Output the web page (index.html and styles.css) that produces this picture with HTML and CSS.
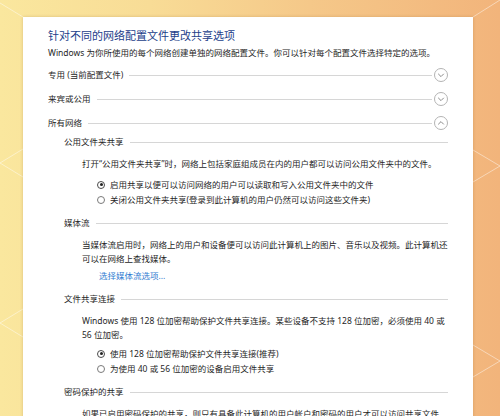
FILE: index.html
```html
<!DOCTYPE html>
<html lang="zh-CN">
<head>
<meta charset="utf-8">
<title>高级共享设置</title>
<link rel="stylesheet" href="styles.css">
</head>
<body>
<svg class="bg-lines" width="500" height="416" viewBox="0 0 500 416" aria-hidden="true">
  <g stroke="#ffffff" stroke-opacity="0.45" stroke-width="1" fill="none">
    <path d="M0 3 L23 17"/>
    <path d="M500 0 L473 17"/>
    <path d="M23 149 L0 163 L23 177"/>
    <path d="M23 309 L0 323 L23 337"/>
    <path d="M473 150 L500 166 L473 182"/>
    <path d="M473 345 L500 361 L473 377"/>
  </g>
</svg>
<main class="card">
  <h1 class="title">针对不同的网络配置文件更改共享选项</h1>
  <p class="intro">Windows 为你所使用的每个网络创建单独的网络配置文件。你可以针对每个配置文件选择特定的选项。</p>

  <div class="groups">
    <div class="group">
      <span class="group-label">专用 (当前配置文件)</span>
      <span class="rule rule-group"></span>
      <span class="toggle">
        <svg width="14" height="14" viewBox="0 0 14 14"><circle cx="7" cy="7" r="6.5" fill="#fff" stroke="#b3b3b3"/><path d="M4.2 5.8 L7 8.6 L9.8 5.8" fill="none" stroke="#8c8c8c" stroke-width="1"/></svg>
      </span>
    </div>
    <div class="group">
      <span class="group-label">来宾或公用</span>
      <span class="rule rule-group"></span>
      <span class="toggle">
        <svg width="14" height="14" viewBox="0 0 14 14"><circle cx="7" cy="7" r="6.5" fill="#fff" stroke="#b3b3b3"/><path d="M4.2 5.8 L7 8.6 L9.8 5.8" fill="none" stroke="#8c8c8c" stroke-width="1"/></svg>
      </span>
    </div>
    <div class="group">
      <span class="group-label">所有网络</span>
      <span class="rule rule-group"></span>
      <span class="toggle">
        <svg width="14" height="14" viewBox="0 0 14 14"><circle cx="7" cy="7" r="6.5" fill="#fff" stroke="#b3b3b3"/><path d="M4.2 8.4 L7 5.6 L9.8 8.4" fill="none" stroke="#8c8c8c" stroke-width="1"/></svg>
      </span>
    </div>
  </div>

  <div class="subs">
    <section class="sub">
      <div class="sub-head"><span>公用文件夹共享</span><span class="rule"></span></div>
      <p class="para">打开“公用文件夹共享”时，网络上包括家庭组成员在内的用户都可以访问公用文件夹中的文件。</p>
      <div class="options">
        <div class="opt"><span class="radio checked"></span><span>启用共享以便可以访问网络的用户可以读取和写入公用文件夹中的文件</span></div>
        <div class="opt"><span class="radio"></span><span>关闭公用文件夹共享(登录到此计算机的用户仍然可以访问这些文件夹)</span></div>
      </div>
    </section>

    <section class="sub">
      <div class="sub-head"><span>媒体流</span><span class="rule"></span></div>
      <p class="para">当媒体流启用时，网络上的用户和设备便可以访问此计算机上的图片、音乐以及视频。此计算机还<br>可以在网络上查找媒体。</p>
      <a class="link" href="#">选择媒体流选项...</a>
    </section>

    <section class="sub">
      <div class="sub-head"><span>文件共享连接</span><span class="rule"></span></div>
      <p class="para">Windows 使用 128 位加密帮助保护文件共享连接。某些设备不支持 128 位加密，必须使用 40 或<br>56 位加密。</p>
      <div class="options options-tight">
        <div class="opt"><span class="radio checked"></span><span>使用 128 位加密帮助保护文件共享连接(推荐)</span></div>
        <div class="opt"><span class="radio"></span><span>为使用 40 或 56 位加密的设备启用文件共享</span></div>
      </div>
    </section>

    <section class="sub">
      <div class="sub-head"><span>密码保护的共享</span><span class="rule"></span></div>
      <p class="para">如果已启用密码保护的共享，则只有具备此计算机的用户帐户和密码的用户才可以访问共享文件</p>
    </section>
  </div>
</main>
</body>
</html>
```

FILE: styles.css
```css
html, body {
  margin: 0;
}

body {
  position: relative;
  width: 500px;
  height: 416px;
  overflow: hidden;
  box-sizing: border-box;
  padding: 17px 0 0 23px;
  background: linear-gradient(90deg, #fae79e 0%, #f8dc96 30%, #f5c889 62%, #f2b47b 100%);
  font-family: "Noto Sans", "Noto Sans CJK SC", sans-serif;
}

.bg-lines {
  position: absolute;
  left: 0;
  top: 0;
  z-index: 0;
}

.card {
  position: relative;
  z-index: 1;
  width: 450px;
  height: 420px;
  box-sizing: border-box;
  padding: 11px 25px 0;
  background: #ffffff;
  box-shadow: 0 0 3px rgba(150, 100, 40, 0.3);
  color: #262626;
  font-size: 8.5px;
}

.title {
  margin: 0;
  font-size: 11px;
  line-height: 16px;
  font-weight: normal;
  color: #23408a;
}

.intro {
  margin: 2px 0 0;
  line-height: 14px;
}

.groups {
  margin-top: 3px;
}

.group {
  display: flex;
  align-items: center;
  height: 24px;
}

.group-label {
  line-height: 14px;
  white-space: nowrap;
}

.rule {
  flex: 1;
  height: 0;
  border-top: 1px solid #d6d6d6;
  margin-left: 6px;
}

.rule-group {
  margin-right: 2px;
}

.toggle {
  flex: none;
  width: 14px;
  height: 14px;
}

.toggle svg {
  display: block;
}

.subs {
  margin-left: 16px;
}

.sub + .sub {
  margin-top: 9px;
}

.sub-head {
  display: flex;
  align-items: center;
  height: 14px;
  line-height: 14px;
  white-space: nowrap;
}

.para {
  margin: 8px 0 0 18px;
  line-height: 14px;
  white-space: nowrap;
}

.options {
  margin: 6px 0 0 33px;
}

.options-tight {
  margin-top: 4px;
}

.opt {
  display: flex;
  align-items: center;
  gap: 5px;
  height: 15px;
  line-height: 15px;
  white-space: nowrap;
}

.radio {
  flex: none;
  position: relative;
  width: 8px;
  height: 8px;
  box-sizing: border-box;
  border: 1px solid #7a7a7a;
  border-radius: 50%;
  background: #fff;
}

.radio.checked {
  border-color: #4a4a4a;
}

.radio.checked::after {
  content: "";
  position: absolute;
  left: 1.5px;
  top: 1.5px;
  width: 3px;
  height: 3px;
  border-radius: 50%;
  background: #222;
}

.link {
  display: block;
  margin: 3px 0 0 35px;
  line-height: 14px;
  color: #2f7bd1;
  text-decoration: none;
}
```
